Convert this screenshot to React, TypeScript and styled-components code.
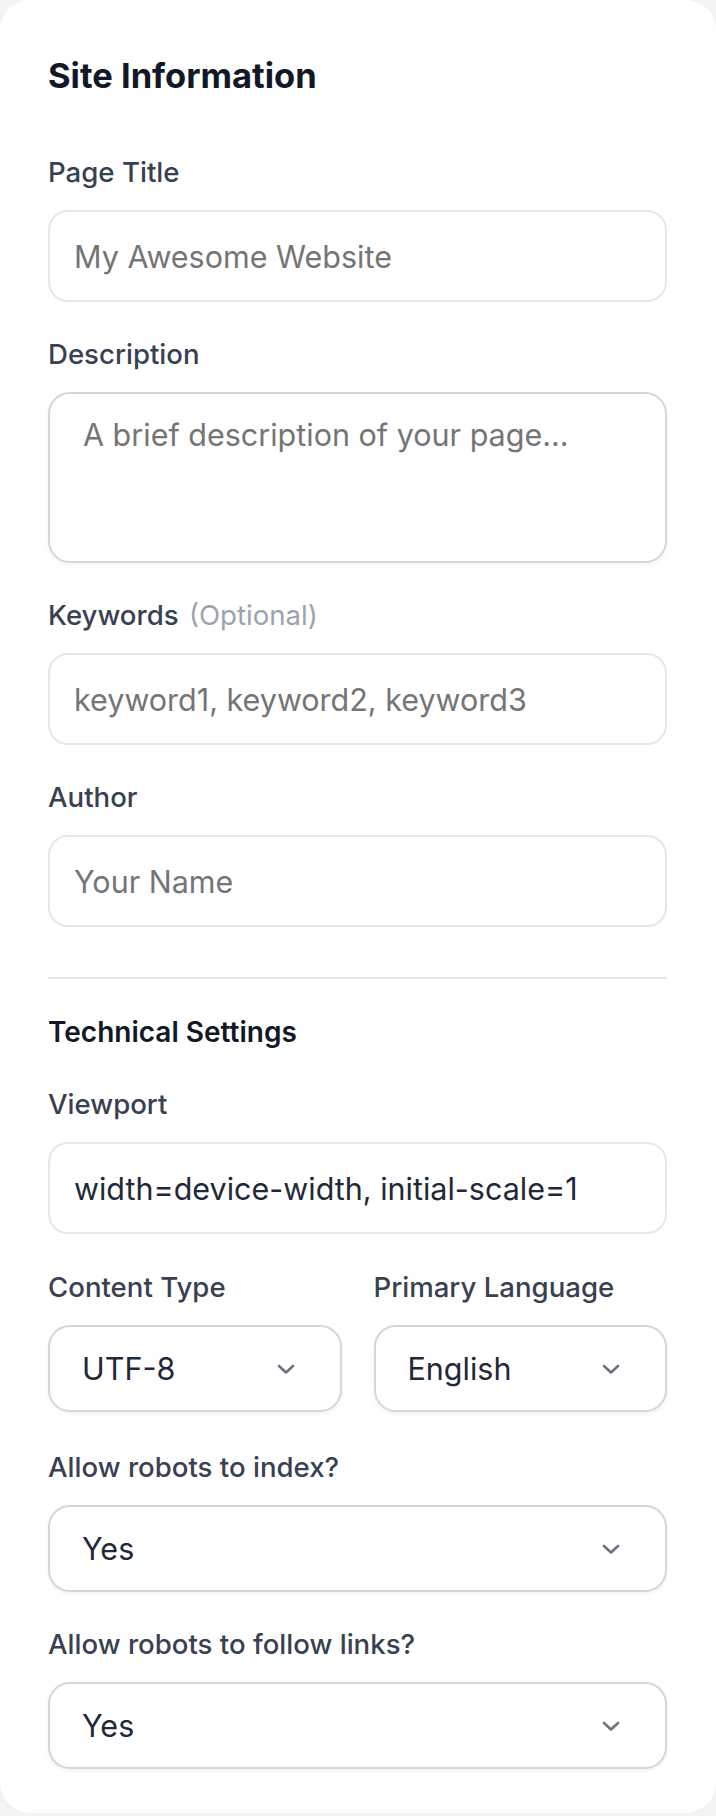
import { useState } from "react";
import styled, { createGlobalStyle } from "styled-components";

const GlobalStyle = createGlobalStyle`
    * {
        box-sizing: border-box;
    }
    body {
        margin: 0;
        background: #f4f4f6;
        font-family: Inter, "Noto Sans", "Liberation Sans", sans-serif;
        -webkit-font-smoothing: antialiased;
    }
`;

const Card = styled.div`
    width: 716px;
    background: #ffffff;
    border-radius: 30px;
    box-shadow: 0 1px 3px rgba(0, 0, 0, 0.04);
    padding: 54px 49px 44px 48px;
`;

const Title = styled.h2`
    margin: 0 0 56px;
    font-size: 34.5px;
    line-height: 44px;
    font-weight: 700;
    color: #111827;
`;

const Fields = styled.div`
    display: flex;
    flex-direction: column;
    gap: 34px;
`;

const Field = styled.div`
    display: flex;
    flex-direction: column;
    gap: 20px;
`;

const Label = styled.label`
    font-size: 27.6px;
    line-height: 36px;
    font-weight: 500;
    color: #374151;
`;

const Hint = styled.span`
    font-weight: 400;
    color: #9ca3af;
    margin-left: 3px;
`;

const Input = styled.input`
    width: 100%;
    height: 92px;
    padding: 0 24px;
    border: 2px solid #e5e7eb;
    border-radius: 20px;
    background: #fff;
    font-family: inherit;
    font-size: 30.5px;
    color: #1f2937;
    outline: none;
    &::placeholder {
        color: #757575;
    }
`;

const TextArea = styled.textarea`
    width: 100%;
    height: 171px;
    padding: 18px 33px;
    border: 2px solid #d6d6d9;
    border-radius: 22px;
    background: #fff;
    font-family: inherit;
    font-size: 30.5px;
    line-height: 45px;
    color: #1f2937;
    resize: none;
    outline: none;
    box-shadow: 0 2px 4px rgba(0, 0, 0, 0.05);
    &::placeholder {
        color: #757575;
    }
`;

const Divider = styled.hr`
    border: none;
    height: 2px;
    background: #e5e7eb;
    margin: 16px 0 1px;
`;

const SubTitle = styled.h3`
    margin: 0 0 2px;
    font-size: 28px;
    line-height: 36px;
    font-weight: 600;
    color: #111827;
`;

const Row = styled.div`
    display: grid;
    grid-template-columns: 1fr 1fr;
    gap: 32px;
    margin: 1px 0 3px;
`;

const SelectWrap = styled.div`
    position: relative;
`;

const Select = styled.select`
    width: 100%;
    height: 87px;
    padding: 0 80px 0 32px;
    border: 2px solid #d6d6d9;
    border-radius: 22px;
    background: #fff;
    appearance: none;
    font-family: inherit;
    font-size: 30.5px;
    color: #1f2937;
    outline: none;
    box-shadow: 0 2px 4px rgba(0, 0, 0, 0.06);
`;

const Chevron = styled.svg`
    position: absolute;
    right: 47px;
    top: 50%;
    width: 18px;
    height: 11px;
    margin-top: -5px;
    pointer-events: none;
`;

function SelectBox({ value, options }: { value: string; options: string[] }) {
    const [v, setV] = useState(value);
    return (
        <SelectWrap>
            <Select value={v} onChange={(e) => setV(e.target.value)}>
                {options.map((o) => (
                    <option key={o}>{o}</option>
                ))}
            </Select>
            <Chevron viewBox="0 0 18 11" fill="none">
                <path d="M2 2 L9 8.5 L16 2" stroke="#6b7280" strokeWidth="2.6" strokeLinecap="round" strokeLinejoin="round" />
            </Chevron>
        </SelectWrap>
    );
}

function App() {
    return (
        <>
            <GlobalStyle />
            <Card>
                <Title>Site Information</Title>
                <Fields>
                    <Field>
                        <Label>Page Title</Label>
                        <Input placeholder="My Awesome Website" />
                    </Field>
                    <Field>
                        <Label>Description</Label>
                        <TextArea placeholder="A brief description of your page..." />
                    </Field>
                    <Field>
                        <Label>
                            Keywords <Hint>(Optional)</Hint>
                        </Label>
                        <Input placeholder="keyword1, keyword2, keyword3" />
                    </Field>
                    <Field>
                        <Label>Author</Label>
                        <Input placeholder="Your Name" />
                    </Field>
                    <Divider />
                    <SubTitle>Technical Settings</SubTitle>
                    <Field>
                        <Label>Viewport</Label>
                        <Input defaultValue="width=device-width, initial-scale=1" />
                    </Field>
                    <Row>
                        <Field>
                            <Label>Content Type</Label>
                            <SelectBox value="UTF-8" options={["UTF-8", "ISO-8859-1"]} />
                        </Field>
                        <Field>
                            <Label>Primary Language</Label>
                            <SelectBox value="English" options={["English", "Spanish", "French"]} />
                        </Field>
                    </Row>
                    <Field>
                        <Label>Allow robots to index?</Label>
                        <SelectBox value="Yes" options={["Yes", "No"]} />
                    </Field>
                    <Field>
                        <Label>Allow robots to follow links?</Label>
                        <SelectBox value="Yes" options={["Yes", "No"]} />
                    </Field>
                </Fields>
            </Card>
        </>
    );
}

export default App;
